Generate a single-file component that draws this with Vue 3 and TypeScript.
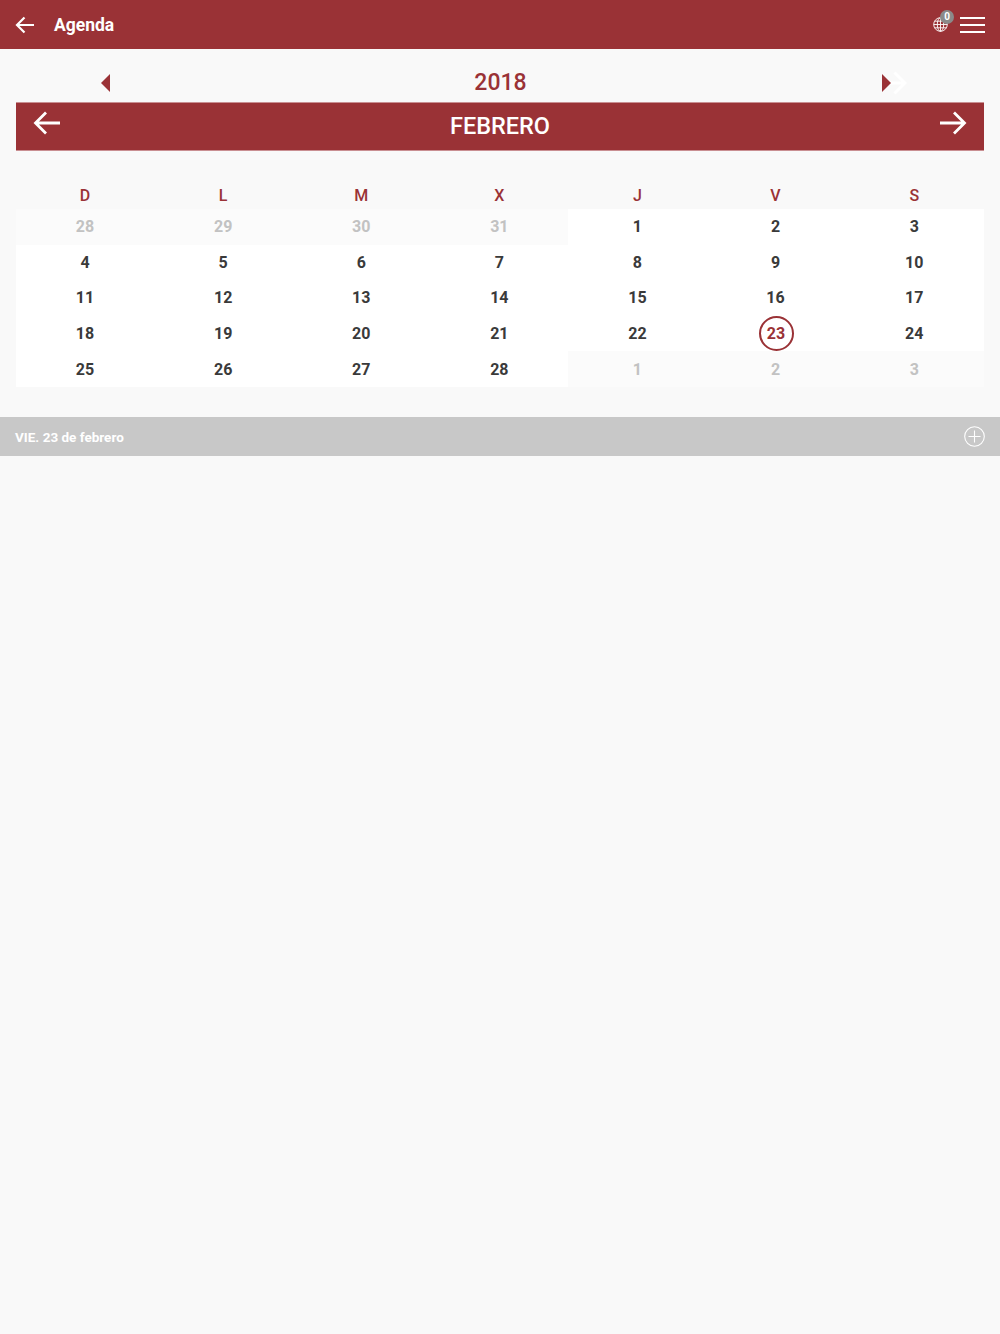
<script setup lang="ts">
interface Day { n: number; muted?: boolean; selected?: boolean }
const weekdays: string[] = ['D', 'L', 'M', 'X', 'J', 'V', 'S']
const days: Day[] = [
  ...[28, 29, 30, 31].map((n) => ({ n, muted: true })),
  ...Array.from({ length: 28 }, (_, i) => ({ n: i + 1, selected: i + 1 === 23 })),
  ...[1, 2, 3].map((n) => ({ n, muted: true })),
]
</script>

<template>
  <div class="page">
    <header class="topbar">
      <svg class="back" width="20" height="18" viewBox="0 0 20 18" fill="none" stroke="#fff" stroke-width="2.2">
        <path d="M19 9H2M9.500 1.500L2 9l7.500 7.500" />
      </svg>
      <span class="title">Agenda</span>
      <div class="actions">
        <span class="globe">
          <svg width="15" height="15" viewBox="0 0 15 15" fill="none" stroke="#fff" stroke-width="0.9">
            <circle cx="7.500" cy="7.500" r="6.800" />
            <ellipse cx="7.500" cy="7.500" rx="3.200" ry="6.800" />
            <path d="M7.500 .7v13.600M.7 7.500h13.600M1.600 4.200h11.800M1.600 10.800h11.800" />
          </svg>
          <span class="badge">0</span>
        </span>
        <span class="menu"><i></i><i></i><i></i></span>
      </div>
    </header>

    <div class="year-row">
      <svg width="9" height="18" viewBox="0 0 9 18"><path d="M9 0v18L0 9z" fill="#9a3236" /></svg>
      <span class="year">2018</span>
      <svg width="25" height="24" viewBox="0 0 25 24" fill="none">
        <path d="M2 12h21M12.500 1.500L23 12 12.500 22.500" stroke="#fff" stroke-width="3" />
        <path d="M0 3v18l9-9z" fill="#9a3236" />
      </svg>
    </div>

    <div class="month-bar">
      <svg width="27" height="24" viewBox="0 0 27 24" fill="none" stroke="#fff" stroke-width="2.800">
        <path d="M27 12H3M13 1.500L2.500 12 13 22.500" />
      </svg>
      <span class="month">FEBRERO</span>
      <svg width="27" height="24" viewBox="0 0 27 24" fill="none" stroke="#fff" stroke-width="2.800">
        <path d="M0 12h24M14 1.500L24.500 12 14 22.500" />
      </svg>
    </div>

    <div class="calendar">
      <div class="weekdays">
        <span v-for="w in weekdays" :key="w">{{ w }}</span>
      </div>
      <div class="days">
        <div v-for="(d, i) in days" :key="i" class="day" :class="{ muted: d.muted }">
          <span :class="{ selected: d.selected }">{{ d.n }}</span>
        </div>
      </div>
    </div>

    <div class="date-bar">
      <span class="date-label">VIE. 23 de febrero</span>
      <svg width="21" height="21" viewBox="0 0 21 21" fill="none" stroke="#fff" stroke-width="1.100">
        <circle cx="10.500" cy="10.500" r="9.800" />
        <path d="M10.500 4.500v12M4.500 10.500h12" />
      </svg>
    </div>
  </div>
</template>

<style>
html, body { margin: 0; background: #f9f9f9; }
</style>

<style scoped>
.page {
  min-height: 1334px;
  background: #f9f9f9;
  font-family: Roboto, "Liberation Sans", sans-serif;
  box-sizing: border-box;
}
.topbar {
  height: 49px;
  background: #9a3236;
  display: flex;
  align-items: center;
  padding: 0 15px;
  box-sizing: border-box;
  color: #fff;
}
.title {
  margin-left: 19px;
  font-size: 17.500px;
  font-weight: 700;
}
.actions {
  margin-left: auto;
  display: flex;
  align-items: center;
  gap: 12px;
}
.globe {
  position: relative;
  display: flex;
}
.badge {
  position: absolute;
  top: -7px;
  right: -6px;
  width: 14px;
  height: 14px;
  border-radius: 50%;
  background: #8a8a8a;
  font-size: 10px;
  font-weight: 700;
  line-height: 14px;
  text-align: center;
}
.menu {
  display: flex;
  flex-direction: column;
  gap: 5px;
  width: 25px;
}
.menu i {
  display: block;
  height: 2px;
  background: #fff;
}
.year-row {
  height: 53px;
  display: flex;
  align-items: center;
  justify-content: space-between;
  padding: 15px 93px 0 101px;
  box-sizing: border-box;
}
.year {
  font-size: 23px;
  font-weight: 500;
  color: #9a3236;
  margin-top: -1px;
  margin-left: 9px;
}
.month-bar {
  height: 49px;
  margin: 0 16px;
  background: #9a3236;
  border-top: 1px solid #c98f92;
  border-bottom: 1px solid #c98f92;
  display: flex;
  align-items: center;
  justify-content: space-between;
  padding: 0 17px 8px;
  box-sizing: border-box;
}
.month {
  font-size: 23.500px;
  font-weight: 500;
  color: #fff;
  margin-bottom: -6px;
}
.calendar {
  margin: 0 16px;
  padding-top: 36px;
}
.weekdays {
  display: grid;
  grid-template-columns: repeat(6, 138.100px) 1fr;
  height: 22px;
  line-height: 18px;
  text-align: center;
  font-size: 16px;
  font-weight: 500;
  color: #9a3236;
}
.days {
  display: grid;
  grid-template-columns: repeat(6, 138.100px) 1fr;
  grid-auto-rows: 35.600px;
}
.day {
  background: #fff;
  display: flex;
  align-items: center;
  justify-content: center;
  font-size: 16px;
  font-weight: 700;
  color: #3a3a3a;
}
.day.muted {
  background: #fbfbfb;
  color: #c2c2c2;
}
.selected {
  width: 35px;
  height: 35px;
  margin-left: 1px;
  box-sizing: border-box;
  border: 2px solid #9a3236;
  border-radius: 50%;
  color: #9a3236;
  display: flex;
  align-items: center;
  justify-content: center;
}
.date-bar {
  height: 39px;
  margin-top: 30px;
  background: #c8c8c8;
  color: #fff;
  display: flex;
  align-items: center;
  justify-content: space-between;
  padding: 0 15px;
  box-sizing: border-box;
  font-size: 13.500px;
  font-weight: 700;
}
.date-label {
  padding-top: 2px;
}
</style>
